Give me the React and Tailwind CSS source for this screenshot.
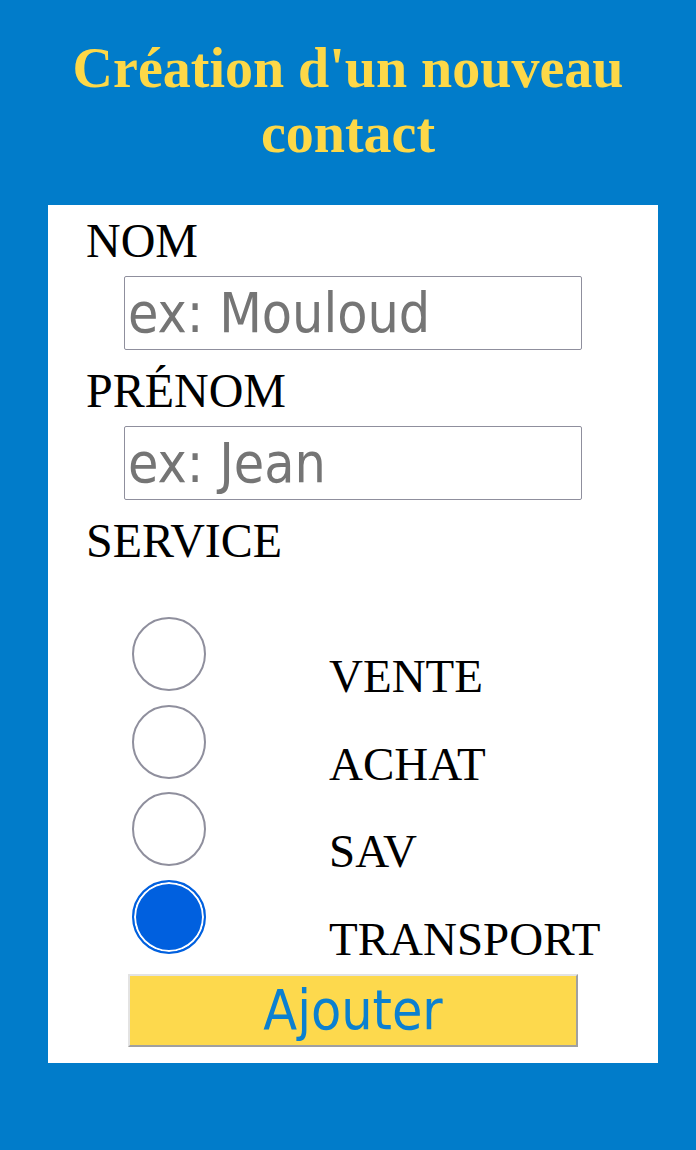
import React from "react";

const serif = { fontFamily: '"Liberation Serif", "Times New Roman", serif' };
const sans = { fontFamily: '"DejaVu Sans Condensed", "DejaVu Sans", sans-serif' };

function Radio({ checked }) {
  if (checked) {
    return (
      <div className="w-[74px] h-[74px] shrink-0 rounded-full border-2 border-[#0060df] bg-[#0060df] shadow-[inset_0_0_0_2px_#ffffff]" />
    );
  }
  return <div className="w-[74px] h-[74px] shrink-0 rounded-full border-2 border-[#8f8f9d] bg-white" />;
}

function RadioRow({ label, checked, className = "" }) {
  return (
    <div className={"flex items-end " + className}>
      <div className="w-[281px] pl-[84px] shrink-0 flex">
        <Radio checked={checked} />
      </div>
      <span className="text-[47px] leading-[54px] text-black -mb-[12px]" style={serif}>
        {label}
      </span>
    </div>
  );
}

export default function App() {
  return (
    <div className="w-[696px] h-[1150px] bg-[#017cca] flex flex-col">
      <h1
        className="mt-[36px] text-center text-[56px] leading-[65px] font-bold text-[#fdd848] w-full"
        style={serif}
      >
        Création d'un nouveau
        <br />
        contact
      </h1>
      <div className="mt-[39px] ml-[48px] w-[610px] bg-white pt-[9px] pb-[16px] flex flex-col">
        <div className="pl-[38px] text-[48px] leading-[54px] text-black" style={serif}>NOM</div>
        <input
          className="mt-[8px] ml-[76px] w-[458px] h-[74px] border border-[#8f8f9d] rounded-[2px] px-[3px] text-[55px] placeholder:text-[#757575] outline-none"
          style={sans}
          placeholder="ex: Mouloud"
        />
        <div className="mt-[14px] pl-[38px] text-[48px] leading-[54px] text-black" style={serif}>PRÉNOM</div>
        <input
          className="mt-[8px] ml-[76px] w-[458px] h-[74px] border border-[#8f8f9d] rounded-[2px] px-[3px] text-[55px] placeholder:text-[#757575] outline-none"
          style={sans}
          placeholder="ex: Jean"
        />
        <div className="mt-[14px] pl-[38px] text-[48px] leading-[54px] text-black" style={serif}>SERVICE</div>
        <RadioRow label="VENTE" className="mt-[49px]" />
        <RadioRow label="ACHAT" className="mt-[14px]" />
        <RadioRow label="SAV" className="mt-[13px]" />
        <RadioRow label="TRANSPORT" checked className="mt-[14px]" />
        <button
          className="mt-[20px] ml-[80px] w-[450px] h-[73px] bg-[#fdd94d] border-2 border-t-[#e3e3e3] border-l-[#e3e3e3] border-r-[#a0a0a0] border-b-[#a0a0a0] text-[55px] leading-none text-[#0b80d0] flex items-center justify-center"
          style={sans}
        >
          Ajouter
        </button>
      </div>
    </div>
  );
}
